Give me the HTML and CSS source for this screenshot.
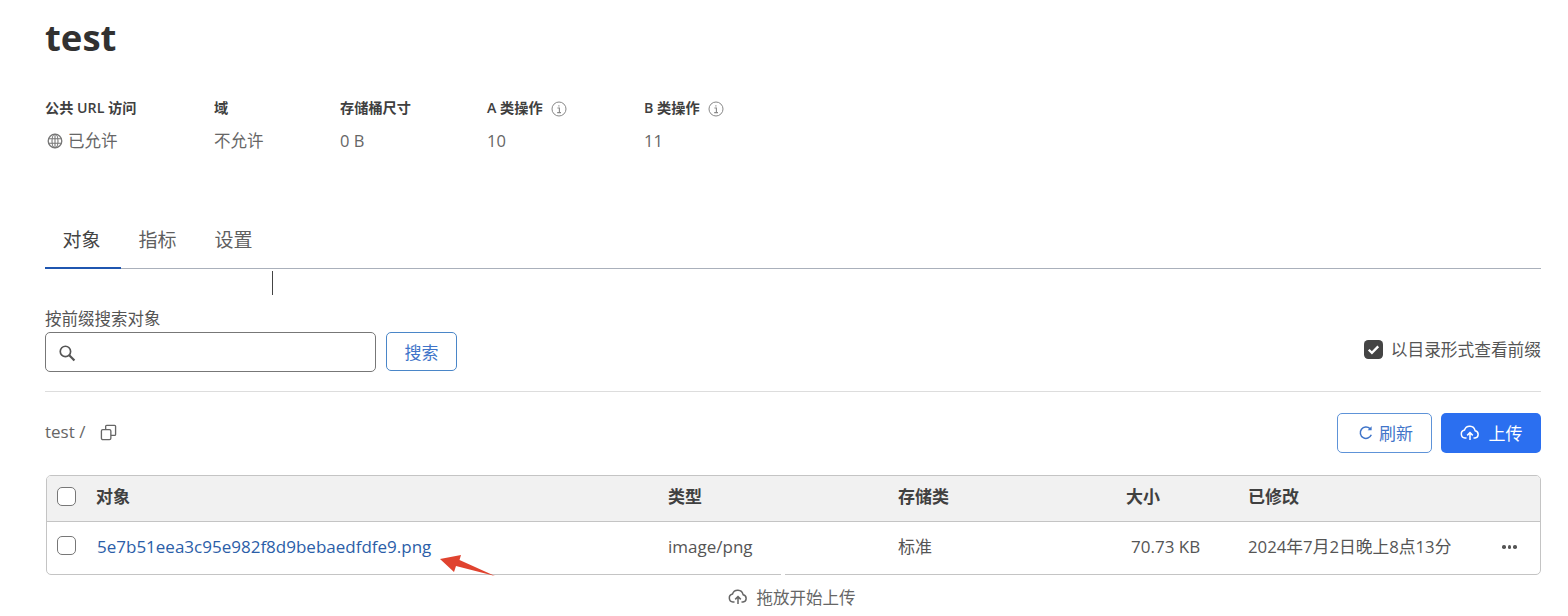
FILE: index.html
```html
<!DOCTYPE html>
<html lang="zh">
<head>
<meta charset="utf-8">
<title>test</title>
<link rel="stylesheet" href="styles.css">
</head>
<body>
<main class="page">
  <h1 class="title">test</h1>
  <section class="stats">
    <div class="stat stat-url">
      <div class="stat-label">公共 URL 访问</div>
      <div class="stat-value"><svg class="globe" viewBox="0 0 16 16"><circle cx="8" cy="8" r="6.8" fill="none" stroke="currentColor" stroke-width="1.3"/><ellipse cx="8" cy="8" rx="3" ry="6.8" fill="none" stroke="currentColor" stroke-width="1.1"/><path d="M1.5 5.8h13M1.5 10.2h13M8 1v14" fill="none" stroke="currentColor" stroke-width="1.1"/></svg>已允许</div>
    </div>
    <div class="stat stat-domain">
      <div class="stat-label">域</div>
      <div class="stat-value">不允许</div>
    </div>
    <div class="stat stat-size">
      <div class="stat-label">存储桶尺寸</div>
      <div class="stat-value">0 B</div>
    </div>
    <div class="stat stat-a">
      <div class="stat-label">A 类操作<svg class="info" viewBox="0 0 16 16"><circle cx="8" cy="8" r="7" fill="none" stroke="currentColor"/><path d="M6.4 7h2v4.4M6.2 11.6h3.8M7.9 4.2v1.3" fill="none" stroke="currentColor" stroke-width="1.1"/></svg></div>
      <div class="stat-value">10</div>
    </div>
    <div class="stat">
      <div class="stat-label">B 类操作<svg class="info" viewBox="0 0 16 16"><circle cx="8" cy="8" r="7" fill="none" stroke="currentColor"/><path d="M6.4 7h2v4.4M6.2 11.6h3.8M7.9 4.2v1.3" fill="none" stroke="currentColor" stroke-width="1.1"/></svg></div>
      <div class="stat-value">11</div>
    </div>
  </section>

  <nav class="tabs">
    <a class="tab active">对象</a>
    <a class="tab">指标</a>
    <a class="tab">设置</a>
  </nav>
  <div class="caret-row"><span class="caret"></span></div>

  <section class="search-row">
    <div class="search-left">
      <label class="search-label">按前缀搜索对象</label>
      <div class="search-controls">
        <div class="search-input"><svg class="search-icon" viewBox="0 0 16 16"><circle cx="6.6" cy="6.6" r="4.6" fill="none" stroke="currentColor" stroke-width="1.5"/><path d="M10 10l4.6 4.6" stroke="currentColor" stroke-width="2" fill="none"/></svg></div>
        <button class="btn btn-outline btn-search">搜索</button>
      </div>
    </div>
    <label class="prefix-toggle"><svg class="checked" viewBox="0 0 18 18"><rect width="18" height="18" rx="4" fill="#444"/><path d="M4.5 9.2l3 3 6-6.2" fill="none" stroke="#fff" stroke-width="2.2"/></svg>以目录形式查看前缀</label>
  </section>

  <section class="path-row">
    <div class="path">test /<svg class="copy" viewBox="0 0 18 18"><rect x="1.5" y="6" width="10" height="10.5" rx="1.5" fill="none" stroke="currentColor" stroke-width="1.4"/><path d="M6 6V2.5A1 1 0 0 1 7 1.5h8.5a1 1 0 0 1 1 1V11a1 1 0 0 1-1 1h-4" fill="none" stroke="currentColor" stroke-width="1.4"/></svg></div>
    <div class="actions">
      <button class="btn btn-outline btn-refresh"><svg class="btn-icon" viewBox="0 0 16 16"><path d="M13.3 9.8A5.7 5.7 0 1 1 12 3.6" fill="none" stroke="currentColor" stroke-width="1.5"/><path d="M13.6 1.2v4h-4" fill="currentColor"/></svg>刷新</button>
      <button class="btn btn-primary"><svg class="cloud" viewBox="0 0 20 16"><path d="M6.5 13H5a4 4 0 0 1-.5-7.9 5.5 5.5 0 0 1 10.6.6A3.7 3.7 0 0 1 15 13h-1.5" fill="none" stroke="currentColor" stroke-width="1.5"/><path d="M10 15V8M7.2 10.4L10 7.6l2.8 2.8" fill="none" stroke="currentColor" stroke-width="1.5"/></svg>上传</button>
    </div>
  </section>

  <section class="table">
    <div class="row head">
      <span class="cell-check"><span class="box"></span></span>
      <span class="c-name">对象</span>
      <span class="c-type">类型</span>
      <span class="c-class">存储类</span>
      <span class="c-size">大小</span>
      <span class="c-date">已修改</span>
    </div>
    <div class="row body">
      <span class="cell-check"><span class="box"></span></span>
      <a class="c-name link">5e7b51eea3c95e982f8d9bebaedfdfe9.png</a>
      <span class="c-type">image/png</span>
      <span class="c-class">标准</span>
      <span class="c-size size-value">70.73 KB</span>
      <span class="c-date">2024年7月2日晚上8点13分</span>
      <span class="more"><i></i><i></i><i></i></span>
    </div>
    <svg class="arrow" viewBox="0 0 56 22"><path d="M0 4 L21 0 L19.500 5 L55 21 L16 11 L14 17 Z" fill="#e0432f"/></svg>
    <span class="notch"></span>
  </section>

  <div class="drop"><svg class="drop-cloud" viewBox="0 0 20 16"><path d="M6.5 13H5a4 4 0 0 1-.5-7.9 5.5 5.5 0 0 1 10.6.6A3.7 3.7 0 0 1 15 13h-1.5" fill="none" stroke="currentColor" stroke-width="1.5"/><path d="M10 15V8M7.2 10.4L10 7.6l2.8 2.8" fill="none" stroke="currentColor" stroke-width="1.5"/></svg>拖放开始上传</div>
</main>
</body>
</html>
```
FILE: styles.css
```css
* { box-sizing: border-box; }
html, body { margin: 0; height: 616px; overflow: hidden; background: #fff; }
body {
  font-family: "Open Sans", "Noto Sans CJK SC", sans-serif;
  font-size: 17px;
  color: #555;
}
.page { padding: 0 27px 0 45px; }
.title {
  margin: 0;
  padding-top: 13px;
  height: 95px;
  font-size: 36.5px;
  line-height: 48px;
  font-weight: 700;
  color: #313131;
}
.stats { display: flex; height: 121px; }
.stat-url { width: 169px; }
.stat-domain { width: 126px; }
.stat-size { width: 147px; }
.stat-a { width: 157px; }
.stat-label {
  display: flex;
  align-items: center;
  height: 28px;
  padding-bottom: 4px;
  font-size: 14.2px;
  font-weight: 600;
  color: #404040;
}
.stat-value {
  display: flex;
  align-items: center;
  height: 28px;
  margin-top: 3px;
  font-size: 16.5px;
  color: #666;
}
.globe { width: 16px; height: 16px; margin: 2px 5px 0 2px; color: #777; }
.info { width: 16px; height: 16px; margin: 4px 0 0 8px; color: #888; }
.tabs { display: flex; height: 53px; border-bottom: 1px solid #aab0bb; }
.tab {
  width: 76px;
  padding: 12px 3px 0 0;
  text-align: center;
  font-size: 19px;
  line-height: 24px;
  color: #5f5f5f;
}
.tab.active {
  color: #444;
  height: 53px;
  border-bottom: 2px solid #1f56b0;
}
.caret-row { height: 39px; padding: 2px 0 0 227px; }
.caret { display: block; width: 1px; height: 24px; background: #444; }
.search-row {
  display: flex;
  justify-content: space-between;
  align-items: flex-end;
  height: 84px;
  padding-bottom: 19px;
  border-bottom: 1px solid #ddd;
}
.search-label { display: block; font-size: 16.5px; line-height: 22px; color: #555; margin-bottom: 2px; }
.search-controls { display: flex; gap: 10px; align-items: flex-start; }
.search-input {
  display: flex;
  align-items: center;
  width: 331px;
  height: 40px;
  padding: 2px 0 0 12px;
  border: 1px solid #777;
  border-radius: 5px;
}
.search-icon { width: 18px; height: 18px; color: #555; }
.btn {
  display: inline-flex;
  align-items: center;
  justify-content: center;
  font: inherit;
  border-radius: 5px;
  background: #fff;
  padding: 0;
}
.btn-outline { border: 1px solid #4a86c8; color: #3f74c9; }
.btn-search { width: 71px; height: 39px; font-size: 17px; }
.prefix-toggle { display: flex; align-items: center; font-size: 16.7px; color: #555; height: 28px; margin-bottom: 9px; }
.checked { width: 19px; height: 19px; margin-right: 8px; }
.path-row {
  display: flex;
  justify-content: space-between;
  align-items: center;
  height: 83px;
  padding-bottom: 2px;
}
.path { display: flex; align-items: center; font-size: 17px; line-height: 22px; color: #666; margin-top: -1px; }
.copy { width: 17px; height: 17px; margin-left: 15px; color: #666; }
.actions { display: flex; gap: 9px; }
.actions .btn { height: 40px; font-size: 17px; }
.btn-refresh { width: 95px; border-color: #5e93d8; padding-left: 2px; }
.btn-icon { width: 16px; height: 16px; margin-right: 5px; }
.btn-primary { width: 100px; background: #2b6ff0; border: 0; color: #fff; }
.cloud { width: 20px; height: 16px; margin-right: 9px; }
.table {
  position: relative;
  height: 100px;
  margin-left: 1px;
  border: 1px solid #c4c4c4;
  border-radius: 5px;
}
.row { display: flex; align-items: center; }
.head {
  height: 46px;
  padding-bottom: 4px;
  background: #f1f1f1;
  border-bottom: 1px solid #c4c4c4;
  border-radius: 4px 4px 0 0;
  font-size: 17px;
  line-height: 22px;
  font-weight: 600;
  color: #404040;
}
.body { height: 52px; padding-bottom: 2px; font-size: 17px; line-height: 22px; color: #555; }
.body .cell-check { margin-top: -3px; }
.cell-check { width: 49px; padding-left: 10px; display: flex; flex: none; }
.box {
  display: block;
  width: 19px;
  height: 19px;
  border: 1.5px solid #777;
  border-radius: 5px;
  background: #fff;
}
.c-name { width: 572px; flex: none; }
.c-type { width: 230px; flex: none; }
.c-class { width: 228px; flex: none; }
.c-size { width: 122px; flex: none; }
.size-value { padding-left: 5px; }
.c-date { white-space: nowrap; }
.link { color: #2b5ea8; padding-left: 1px; }
.more { display: flex; gap: 2px; padding-left: 1px; }
.more i { display: block; width: 3.5px; height: 3.5px; border-radius: 50%; background: #555; }
.body .c-date { width: 253px; flex: none; font-size: 16.75px; }
.arrow { position: absolute; left: 393px; top: 79px; width: 56px; height: 22px; overflow: hidden; }
.notch { position: absolute; left: 734px; bottom: -1px; width: 4px; height: 1px; background: #fff; }
.drop {
  display: flex;
  align-items: center;
  justify-content: center;
  height: 44px;
  margin-left: 1px;
  padding: 0 4px 1px 0;
  font-size: 16.5px;
  color: #666;
}
.drop-cloud { width: 20px; height: 16px; margin-right: 9px; color: #666; }
```
